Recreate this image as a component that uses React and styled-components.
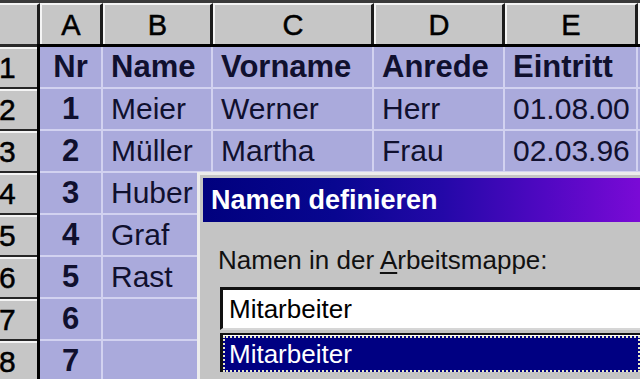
import styled, { createGlobalStyle } from "styled-components";

const GlobalStyle = createGlobalStyle`
    html, body {
        margin: 0;
        padding: 0;
        overflow: hidden;
        background: #c4c4c4;
    }
`;

const COLS = [63, 110, 161, 131, 133, 120];
const LETTERS = ["A", "B", "C", "D", "E", ""];

const HEAD = ["Nr", "Name", "Vorname", "Anrede", "Eintritt", ""];
const ROWS = [
    ["1", "Meier", "Werner", "Herr", "01.08.00", ""],
    ["2", "Müller", "Martha", "Frau", "02.03.96", ""],
    ["3", "Huber", "", "", "", ""],
    ["4", "Graf", "", "", "", ""],
    ["5", "Rast", "", "", "", ""],
    ["6", "", "", "", "", ""],
    ["7", "", "", "", "", ""],
];

const Screen = styled.div`
    position: relative;
    width: 640px;
    height: 379px;
    overflow: hidden;
    font-family: "Liberation Sans", Arial, sans-serif;
    background: #c4c4c4;
`;

const Sheet = styled.div`
    display: flex;
    flex-direction: column;
    width: 820px;
`;

const HeaderRow = styled.div`
    display: flex;
    height: 44px;
    box-sizing: border-box;
    border-top: 3px solid #3a3a3a;
`;

const Corner = styled.div`
    width: 40px;
    flex-shrink: 0;
    box-sizing: border-box;
    background: #c6c6c6;
    border-right: 3px solid #1c1c1c;
    border-top: 2px solid #f4f4f4;
`;

const ColHeader = styled.div`
    width: ${({$w}) => $w}px;
    flex-shrink: 0;
    box-sizing: border-box;
    display: flex;
    align-items: center;
    justify-content: center;
    padding-top: 2px;
    background: #c6c6c6;
    border-left: 2px solid #f4f4f4;
    border-top: 2px solid #f4f4f4;
    border-right: 3px solid #1c1c1c;
    font-size: 29px;
    color: #000;
    -webkit-text-stroke: 0.5px #000;
`;

const Body = styled.div`
    display: flex;
`;

const RowHeaders = styled.div`
    width: 37px;
    flex-shrink: 0;
    display: flex;
    flex-direction: column;
    border-top: 3px solid #2a2a2a;
`;

const RowHeader = styled.div`
    height: 42px;
    box-sizing: border-box;
    display: flex;
    align-items: center;
    background: #c6c6c6;
    border-top: 2px solid #f4f4f4;
    border-bottom: 2px solid #262626;
    font-size: 30px;
    color: #000;
    margin-left: -1px;
    -webkit-text-stroke: 0.5px #000;
`;

const DataBlock = styled.div`
    display: flex;
    flex-direction: column;
    border-top: 3px solid #000;
    border-left: 3px solid #000;
    background: #aaaadc;
`;

const DataRow = styled.div`
    display: flex;
    height: 42px;
`;

const Cell = styled.div`
    width: ${({$w}) => $w}px;
    flex-shrink: 0;
    box-sizing: border-box;
    display: flex;
    align-items: center;
    justify-content: ${({$center}) => $center ? "center" : "flex-start"};
    padding-left: ${({$center}) => $center ? 0 : 8}px;
    border-right: 2px solid #d2d2f0;
    border-bottom: 2px solid #d2d2f0;
    white-space: nowrap;
    overflow: hidden;
    font-size: ${({$bold}) => $bold ? 31 : 30}px;
    font-weight: ${({$bold}) => $bold ? 700 : 400};
    color: #10102e;
`;

const Dialog = styled.div`
    position: absolute;
    left: 197px;
    top: 172px;
    right: 0;
    bottom: 0;
    display: flex;
    flex-direction: column;
    background: #c4c4c4;
    border-top: 3px solid #ececec;
    border-left: 3px solid #ececec;
    padding: 3px 0 0 3px;
`;

const TitleBar = styled.div`
    height: 44px;
    flex-shrink: 0;
    display: flex;
    align-items: center;
    padding-left: 8px;
    background: linear-gradient(90deg, #00007e 0%, #080690 30%, #2408a8 55%, #5008c2 78%, #7a0ad6 100%);
    color: #fff;
    font-size: 27px;
    font-weight: 700;
    white-space: nowrap;
`;

const DialogBody = styled.div`
    display: flex;
    flex-direction: column;
    padding-left: 15px;
`;

const Label = styled.div`
    margin-top: 23px;
    height: 30px;
    line-height: 30px;
    font-size: 26px;
    color: #111;
    white-space: nowrap;

    u {
        text-decoration-thickness: 2px;
        text-underline-offset: 3px;
    }
`;

const Input = styled.div`
    margin: 12px 0 0 2px;
    height: 43px;
    box-sizing: border-box;
    display: flex;
    align-items: center;
    padding-left: 6px;
    background: #fff;
    border-top: 3px solid #111;
    border-left: 3px solid #111;
    border-bottom: 2px solid #d6d6d6;
    font-size: 26px;
    color: #000;
`;

const ListBox = styled.div`
    margin: 3px 0 0 2px;
    flex-grow: 1;
    display: flex;
    flex-direction: column;
    background: #fff;
    border-top: 2px solid #111;
    border-left: 3px solid #111;
`;

const ListItem = styled.div`
    height: 36px;
    margin-top: 1px;
    box-sizing: border-box;
    display: flex;
    align-items: center;
    padding-left: 4px;
    background: ${({$selected}) => $selected ? "#000082" : "#fff"};
    color: ${({$selected}) => $selected ? "#fff" : "#000"};
    border: 2px dotted ${({$selected}) => $selected ? "#e8e8c8" : "transparent"};
    font-size: 26px;
`;

export default function App() {
    return (
        <Screen>
            <GlobalStyle />
            <Sheet>
                <HeaderRow>
                    <Corner />
                    {COLS.map((w, i) => (
                        <ColHeader key={i} $w={w}>{LETTERS[i]}</ColHeader>
                    ))}
                </HeaderRow>
                <Body>
                    <RowHeaders>
                        {[1, 2, 3, 4, 5, 6, 7, 8].map((n) => (
                            <RowHeader key={n}>{n}</RowHeader>
                        ))}
                    </RowHeaders>
                    <DataBlock>
                        <DataRow>
                            {HEAD.map((t, i) => (
                                <Cell key={i} $w={COLS[i]} $center={i === 0} $bold>{t}</Cell>
                            ))}
                        </DataRow>
                        {ROWS.map((row, r) => (
                            <DataRow key={r}>
                                {row.map((t, i) => (
                                    <Cell key={i} $w={COLS[i]} $center={i === 0} $bold={i === 0}>{t}</Cell>
                                ))}
                            </DataRow>
                        ))}
                    </DataBlock>
                </Body>
            </Sheet>
            <Dialog>
                <TitleBar>Namen definieren</TitleBar>
                <DialogBody>
                    <Label>Namen in der <u>A</u>rbeitsmappe:</Label>
                    <Input>Mitarbeiter</Input>
                    <ListBox>
                        <ListItem $selected>Mitarbeiter</ListItem>
                    </ListBox>
                </DialogBody>
            </Dialog>
        </Screen>
    );
}
